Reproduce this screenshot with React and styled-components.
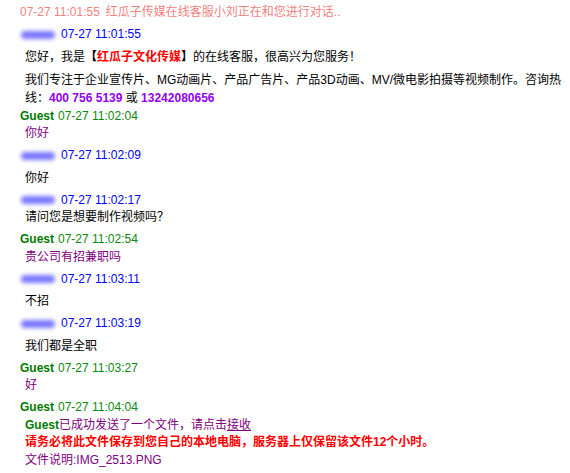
import React from "react";
import styled, { createGlobalStyle } from "styled-components";

const GlobalStyle = createGlobalStyle`
  html, body {
    margin: 0;
    background: #fff;
  }
  body {
    font-family: "Liberation Sans", "Noto Sans CJK SC", sans-serif;
    font-size: 12px;
    color: #000;
  }
`;

const ChatLog = styled.div`
  width: 570px;
  height: 473px;
  box-sizing: border-box;
  padding: 4px 0 0 20px;
  overflow: hidden;
  line-height: 17.5px;
`;

const SystemLine = styled.div`
  color: #f47f7f;
  margin-bottom: 4.5px;
  white-space: nowrap;

  span + span {
    margin-left: 6px;
  }
`;

const Message = styled.div`
  margin-bottom: ${(p) => (p.$tight ? "1px" : "4.5px")};
`;

const Header = styled.div`
  display: flex;
  align-items: center;
  white-space: nowrap;
  color: ${(p) => (p.$guest ? "#0a8a0a" : "#0000ff")};
`;

const AgentName = styled.span`
  display: inline-block;
  width: 34px;
  height: 8px;
  margin: 0 6px 0 1px;
  border-radius: 4px;
  background: #7a76ff;
  filter: blur(2px);
`;

const GuestName = styled.b`
  color: #007a00;
  font-weight: bold;
  margin-right: 4px;
`;

const Body = styled.div`
  padding-left: 5px;
  color: ${(p) => p.$color || "#000"};
  margin-top: ${(p) => (p.$spaced ? "5px" : "0")};
`;

const Para = styled.p`
  margin: 4.5px 0 0;
  padding-right: 2px;
  line-height: 18px;
`;

const Brand = styled.b`
  color: #ff0000;
`;

const Phone = styled.b`
  color: #9300f5;
`;

const Warning = styled.div`
  color: #ff0000;
  font-weight: bold;
`;

const Accept = styled.span`
  text-decoration: underline;
`;

const GuestTag = styled.b`
  color: #007a00;
`;

const AgentHeader = ({ time }) => (
  <Header>
    <AgentName />
    {time}
  </Header>
);

const GuestHeader = ({ time }) => (
  <Header $guest>
    <GuestName>Guest</GuestName>
    {time}
  </Header>
);

export default function App() {
  return (
    <>
      <GlobalStyle />
      <ChatLog lang="zh-CN">
        <SystemLine>
          <span>07-27 11:01:55</span>
          <span>红瓜子传媒在线客服小刘正在和您进行对话..</span>
        </SystemLine>

        <Message $tight>
          <AgentHeader time="07-27 11:01:55" />
          <Body>
            <Para>
              您好，我是<b>【</b>
              <Brand>红瓜子文化传媒</Brand>
              <b>】</b>的在线客服，很高兴为您服务！
            </Para>
            <Para>
              我们专注于企业宣传片、MG动画片、产品广告片、产品3D动画、MV/微电影拍摄等视频制作。咨询热线：
              <Phone>400 756 5139</Phone> 或 <Phone>13242080656</Phone>
            </Para>
          </Body>
        </Message>

        <Message>
          <GuestHeader time="07-27 11:02:04" />
          <Body $color="#800080">你好</Body>
        </Message>

        <Message>
          <AgentHeader time="07-27 11:02:09" />
          <Body $spaced>你好</Body>
        </Message>

        <Message>
          <AgentHeader time="07-27 11:02:17" />
          <Body>请问您是想要制作视频吗？</Body>
        </Message>

        <Message>
          <GuestHeader time="07-27 11:02:54" />
          <Body $color="#800080">贵公司有招兼职吗</Body>
        </Message>

        <Message>
          <AgentHeader time="07-27 11:03:11" />
          <Body $spaced>不招</Body>
        </Message>

        <Message>
          <AgentHeader time="07-27 11:03:19" />
          <Body $spaced>我们都是全职</Body>
        </Message>

        <Message>
          <GuestHeader time="07-27 11:03:27" />
          <Body $color="#800080">好</Body>
        </Message>

        <Message>
          <GuestHeader time="07-27 11:04:04" />
          <Body $color="#800080">
            <GuestTag>Guest</GuestTag>已成功发送了一个文件，请点击
            <Accept>接收</Accept>
            <Warning>请务必将此文件保存到您自己的本地电脑，服务器上仅保留该文件12个小时。</Warning>
            文件说明:IMG_2513.PNG
          </Body>
        </Message>
      </ChatLog>
    </>
  );
}
